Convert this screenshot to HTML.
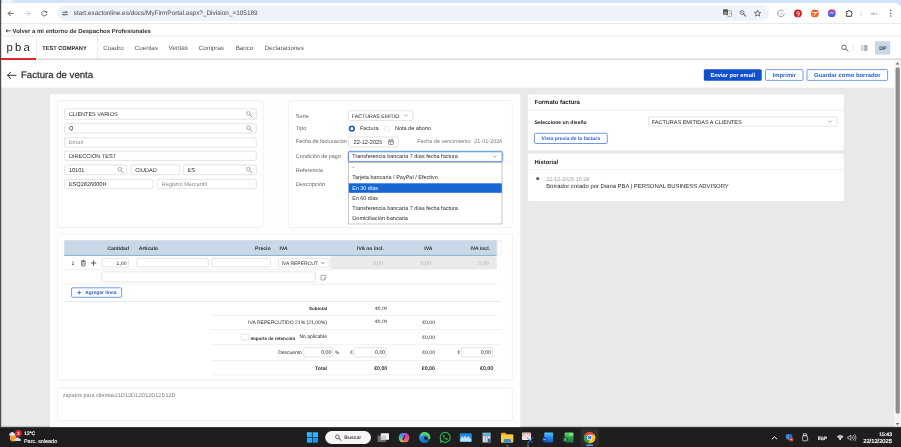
<!DOCTYPE html>
<html lang="es"><head><meta charset="utf-8"><title>Factura de venta</title>
<style>html,body{margin:0;padding:0;width:901px;height:447px;overflow:hidden;background:#fff}body{position:relative;font-family:'Liberation Sans', Arial, sans-serif;}.r{position:absolute;box-sizing:border-box}.t{position:absolute;white-space:pre;line-height:1;text-rendering:geometricPrecision}svg{overflow:visible}</style></head><body>
<svg id="bg" style="position:absolute;left:0;top:0" width="901" height="447" viewBox="0 0 901 447">
<rect x="0.00" y="0.00" width="901.00" height="10.00" fill="#d3e2fb"/>
<path d="M2.00,0.00 H13.00 A0.0,0.0 0 0 1 13.00,0.00 V0.00 A3.0,3.0 0 0 1 10.00,3.00 H5.00 A3.0,3.0 0 0 1 2.00,0.00 V0.00 A0.0,0.0 0 0 1 2.00,0.00 Z" fill="#f1f5fd"/>
<path d="M1.00,3.00 H895.00 A6.0,6.0 0 0 1 901.00,9.00 V23.00 A0.0,0.0 0 0 1 901.00,23.00 H1.00 A0.0,0.0 0 0 1 1.00,23.00 V3.00 A0.0,0.0 0 0 1 1.00,3.00 Z" fill="#fff"/>
<rect x="57.60" y="5.50" width="711.60" height="15.30" rx="7.6" fill="#eef2fa"/>
<rect x="1.00" y="23.00" width="900.00" height="0.70" fill="#dfe1e5"/>
<rect x="1.00" y="35.60" width="900.00" height="0.70" fill="#dedede"/>
<rect x="36.00" y="37.00" width="0.70" height="21.50" fill="#e6e6e6"/>
<rect x="97.20" y="37.00" width="0.70" height="21.50" fill="#e6e6e6"/>
<rect x="1.00" y="58.30" width="900.00" height="1.70" fill="#e2dcda"/>
<rect x="1.00" y="58.00" width="35.00" height="2.00" fill="#e1262d"/>
<rect x="875.00" y="41.30" width="15.30" height="13.30" fill="#c8d8e6"/>
<rect x="852.60" y="44.50" width="0.60" height="7.00" fill="#ddd"/>
<rect x="1.00" y="87.60" width="893.30" height="339.40" fill="#e9e9e7"/>
<rect x="894.30" y="60.00" width="6.70" height="367.00" fill="#f4f4f4"/>
<rect x="895.60" y="67.30" width="4.20" height="346.40" rx="2.0" fill="#8d8d8d"/>
<rect x="0.00" y="0.00" width="1.20" height="447.00" fill="#4a4a4a"/>
<rect x="0.00" y="427.00" width="901.00" height="20.00" fill="#1e1e1f"/>
<rect x="0.00" y="426.70" width="901.00" height="0.70" fill="#6a6a6a"/>
<rect x="703.80" y="69.20" width="57.90" height="11.60" rx="1.5" fill="#0f4fd0"/>
<rect x="765.50" y="69.60" width="37.50" height="10.80" rx="1.10" fill="#fff" stroke="#4f7fde" stroke-width="0.8"/>
<rect x="807.00" y="69.60" width="80.60" height="10.80" rx="1.10" fill="#fff" stroke="#4f7fde" stroke-width="0.8"/>
<rect x="50.00" y="94.20" width="470.30" height="332.80" fill="#fefefe"/>
<rect x="57.55" y="100.55" width="205.70" height="127.00" rx="1.65" fill="#fff" stroke="#ececec" stroke-width="0.7"/>
<rect x="288.55" y="100.55" width="223.70" height="127.00" rx="1.65" fill="#fff" stroke="#ececec" stroke-width="0.7"/>
<rect x="57.55" y="234.05" width="454.90" height="146.00" rx="1.65" fill="#fff" stroke="#ececec" stroke-width="0.7"/>
<rect x="57.55" y="387.95" width="454.90" height="32.70" rx="1.65" fill="#fff" stroke="#ececec" stroke-width="0.7"/>
<rect x="528.00" y="94.40" width="315.80" height="55.90" rx="1.0" fill="#fff"/>
<rect x="528.00" y="153.70" width="315.80" height="47.30" rx="1.0" fill="#fff"/>
<rect x="528.00" y="109.80" width="315.80" height="0.70" fill="#ececec"/>
<rect x="528.00" y="169.20" width="315.80" height="0.70" fill="#ececec"/>
<rect x="64.55" y="108.85" width="191.70" height="10.40" rx="1.15" fill="#fff" stroke="#d9d9d9" stroke-width="0.7"/>
<rect x="64.55" y="123.65" width="191.70" height="9.40" rx="1.15" fill="#fff" stroke="#d9d9d9" stroke-width="0.7"/>
<rect x="64.55" y="137.75" width="191.70" height="9.30" rx="1.15" fill="#fff" stroke="#d9d9d9" stroke-width="0.7"/>
<rect x="64.55" y="151.15" width="191.70" height="9.20" rx="1.15" fill="#fff" stroke="#d9d9d9" stroke-width="0.7"/>
<rect x="64.55" y="164.95" width="62.30" height="9.70" rx="1.15" fill="#fff" stroke="#d9d9d9" stroke-width="0.7"/>
<rect x="130.95" y="164.95" width="48.90" height="9.70" rx="1.15" fill="#fff" stroke="#d9d9d9" stroke-width="0.7"/>
<rect x="183.75" y="164.95" width="72.50" height="9.70" rx="1.15" fill="#fff" stroke="#d9d9d9" stroke-width="0.7"/>
<rect x="64.55" y="179.35" width="88.50" height="9.30" rx="1.15" fill="#fff" stroke="#d9d9d9" stroke-width="0.7"/>
<rect x="157.15" y="179.35" width="99.10" height="9.30" rx="1.15" fill="#fff" stroke="#d9d9d9" stroke-width="0.7"/>
<rect x="348.55" y="110.75" width="64.30" height="9.70" rx="1.15" fill="#fff" stroke="#d9d9d9" stroke-width="0.7"/>
<rect x="348.55" y="136.95" width="49.70" height="9.90" rx="1.15" fill="#fff" stroke="#d9d9d9" stroke-width="0.7"/>
<rect x="347.40" y="150.50" width="156.00" height="12.40" rx="2.30" fill="#6fa0ea" opacity="0.45"/><rect x="348.65" y="151.75" width="153.50" height="9.90" rx="1.05" fill="#fff" stroke="#4a86e0" stroke-width="0.9"/>
<rect x="348.50" y="162.30" width="153.50" height="61.70" rx="0.00" fill="#fff" stroke="#a0a0a0" stroke-width="0.6"/>
<rect x="348.80" y="183.30" width="153.00" height="9.50" fill="#1666d4"/>
<rect x="648.55" y="116.95" width="188.70" height="9.20" rx="1.15" fill="#fff" stroke="#d9d9d9" stroke-width="0.7"/>
<rect x="534.50" y="133.30" width="72.80" height="10.20" rx="1.10" fill="#fff" stroke="#4f7fde" stroke-width="0.8"/>
<rect x="64.20" y="240.20" width="432.60" height="15.50" fill="#c8d8e6"/><rect x="64.20" y="254.90" width="432.60" height="0.80" fill="#7aa2cf"/>
<rect x="497.10" y="240.50" width="4.10" height="14.40" rx="0.00" fill="#fff" stroke="#dde3ea" stroke-width="0.6"/>
<rect x="330.40" y="256.20" width="166.40" height="13.30" fill="#e9e9e7"/>
<rect x="64.20" y="269.50" width="266.20" height="0.60" fill="#e6e6e6"/>
<rect x="64.20" y="283.80" width="432.60" height="0.60" fill="#e6e6e6"/>
<rect x="64.20" y="301.30" width="437.20" height="0.60" fill="#d8d8d8"/>
<rect x="210.80" y="314.90" width="286.00" height="0.60" fill="#e6e6e6"/>
<rect x="210.80" y="329.00" width="290.60" height="0.60" fill="#e6e6e6"/>
<rect x="210.80" y="344.50" width="290.60" height="0.60" fill="#e6e6e6"/>
<rect x="210.80" y="360.20" width="286.00" height="0.60" fill="#e6e6e6"/>
<rect x="210.80" y="374.60" width="286.00" height="0.60" fill="#e6e6e6"/>
<rect x="101.75" y="258.35" width="26.70" height="8.80" rx="1.15" fill="#fff" stroke="#d9d9d9" stroke-width="0.7"/>
<rect x="136.95" y="258.35" width="71.30" height="8.80" rx="1.15" fill="#fff" stroke="#d9d9d9" stroke-width="0.7"/>
<rect x="211.95" y="258.35" width="58.50" height="8.80" rx="1.15" fill="#fff" stroke="#d9d9d9" stroke-width="0.7"/>
<rect x="278.55" y="258.35" width="50.70" height="8.80" rx="1.15" fill="#fff" stroke="#d9d9d9" stroke-width="0.7"/>
<rect x="101.75" y="271.95" width="213.50" height="9.90" rx="1.15" fill="#fff" stroke="#d9d9d9" stroke-width="0.7"/>
<rect x="71.60" y="287.80" width="50.00" height="9.50" rx="1.10" fill="#fff" stroke="#4f7fde" stroke-width="0.8"/>
<rect x="303.75" y="347.65" width="28.90" height="9.40" rx="1.15" fill="#fff" stroke="#d9d9d9" stroke-width="0.7"/>
<rect x="354.05" y="347.65" width="32.20" height="9.40" rx="1.15" fill="#fff" stroke="#d9d9d9" stroke-width="0.7"/>
<rect x="461.35" y="347.65" width="31.10" height="9.40" rx="1.15" fill="#fff" stroke="#d9d9d9" stroke-width="0.7"/>
<rect x="241.30" y="334.10" width="7.00" height="5.80" rx="0.70" fill="#fff" stroke="#d0d0d0" stroke-width="0.6"/>
<rect x="325.20" y="431.00" width="45.80" height="13.00" rx="6.5" fill="#f6f6f6"/>
<rect x="580.50" y="428.80" width="18.50" height="17.80" rx="2.0" fill="#2d2d2e"/>
<rect x="586.20" y="444.60" width="6.80" height="1.40" rx="0.7" fill="#4fa3e0"/>
</svg>
<svg style="position:absolute;left:0;top:0" width="901" height="447" viewBox="0 0 901 447"><g transform="translate(10.7,13.4)"><path d="M2.6,0 H-2.4 M-0.2,-2.3 L-2.5,0 L-0.2,2.3" fill="none" stroke="#555" stroke-width="0.85" stroke-linecap="round" stroke-linejoin="round"/></g></svg>
<svg style="position:absolute;left:0;top:0" width="901" height="447" viewBox="0 0 901 447"><g transform="translate(27.5,13.4)"><path d="M-2.6,0 H2.4 M0.2,-2.3 L2.5,0 L0.2,2.3" fill="none" stroke="#c2c2c2" stroke-width="0.85" stroke-linecap="round" stroke-linejoin="round"/></g></svg>
<svg style="position:absolute;left:0;top:0" width="901" height="447" viewBox="0 0 901 447"><g transform="translate(44.3,13.4)"><path d="M2.3,-0.9 A2.5,2.5 0 1 0 2.4,0.9" fill="none" stroke="#555" stroke-width="0.85" stroke-linecap="round"/><path d="M2.9,-2.6 V-0.6 H0.9 Z" fill="#555"/></g></svg>
<svg style="position:absolute;left:0;top:0" width="901" height="447" viewBox="0 0 901 447"><g transform="translate(65,13.4)"><path d="M-2.6,-1.2 H0.2 M1.8,-1.2 H2.6 M-2.6,1.2 H-1.6 M0,1.2 H2.6" stroke="#555" stroke-width="0.8" stroke-linecap="round"/><circle cx="1" cy="-1.2" r="0.8" fill="none" stroke="#555" stroke-width="0.6"/><circle cx="-0.9" cy="1.2" r="0.8" fill="none" stroke="#555" stroke-width="0.6"/></g></svg>
<svg style="position:absolute;left:0;top:0" width="901" height="447" viewBox="0 0 901 447"><g transform="translate(727.4,13.0)"><rect x="0" y="-2.2" width="4.2" height="5.6" rx="0.6" fill="#fff" stroke="#777" stroke-width="0.6"/><rect x="-4.4" y="-3.8" width="5" height="5.6" rx="0.7" fill="#555"/><path d="M-2.9,-1 A1.1,1.1 0 1 0 -0.9,-0.6 H-2" fill="none" stroke="#fff" stroke-width="0.5"/><path d="M1.4,0.2 H3.4 M2.4,-0.3 V0.2 M1.6,2.4 L3.2,0.4" stroke="#777" stroke-width="0.45" fill="none"/></g></svg>
<svg style="position:absolute;left:0;top:0" width="901" height="447" viewBox="0 0 901 447"><g transform="translate(742.6,13.1)"><circle cx="-0.6" cy="-0.6" r="2.0" fill="none" stroke="#666" stroke-width="0.85"/><path d="M1.1,1.1 L3.1,3.1" stroke="#666" stroke-width="1.05" stroke-linecap="round"/></g></svg>
<svg style="position:absolute;left:0;top:0" width="901" height="447" viewBox="0 0 901 447"><g transform="translate(742.0,12.5)"><path d="M-1,0 H1" stroke="#666" stroke-width="0.5"/></g></svg>
<svg style="position:absolute;left:0;top:0" width="901" height="447" viewBox="0 0 901 447"><g transform="translate(757.6,13.3)"><path d="M0,-3.1 L0.95,-1.05 L3.1,-0.85 L1.45,0.6 L1.95,2.8 L0,1.65 L-1.95,2.8 L-1.45,0.6 L-3.1,-0.85 L-0.95,-1.05 Z" fill="none" stroke="#4a4a4a" stroke-width="0.75" stroke-linejoin="round"/></g></svg>
<svg width="0" height="0" style="position:absolute"><defs><linearGradient id="gExt" x1="0" y1="0" x2="0" y2="1"><stop offset="0" stop-color="#e0405e"/><stop offset="0.45" stop-color="#7a55e0"/><stop offset="1" stop-color="#2468ea"/></linearGradient></defs></svg>
<svg style="position:absolute;left:0;top:0" width="901" height="447" viewBox="0 0 901 447"><g transform="translate(781,13.4)"><path d="M2.6,-2 A3.3,3.3 0 1 0 3.3,0.2" fill="none" stroke="#9a9a9a" stroke-width="1"/><path d="M-1.2,0.2 L-0.2,1.2 L1.8,-1" fill="none" stroke="#9a9a9a" stroke-width="0.8"/></g></svg>
<svg style="position:absolute;left:0;top:0" width="901" height="447" viewBox="0 0 901 447"><g transform="translate(797.9,13.4)"><circle r="3.9" fill="#cf1620"/><circle cx="0.1" cy="-0.6" r="1.3" fill="none" stroke="#fff" stroke-width="0.7"/><path d="M1.4,-0.6 V1.4 A1.3,1.3 0 0 1 -1,2" fill="none" stroke="#fff" stroke-width="0.7"/></g></svg>
<svg style="position:absolute;left:0;top:0" width="901" height="447" viewBox="0 0 901 447"><g transform="translate(814.9,13.4)"><circle r="3.9" fill="#f2652f"/><path d="M-2.2,-0.9 H2.4 M0.9,-0.9 L-0.8,2.2" stroke="#fff" stroke-width="0.9" fill="none" stroke-linecap="round"/></g></svg>
<svg style="position:absolute;left:0;top:0" width="901" height="447" viewBox="0 0 901 447"><g transform="translate(831.8,13.2)"><circle r="3.9" fill="url(#gExt)"/><path d="M-1.8,0.6 L-0.4,-1 L0.4,0.4 L1.8,-0.8" fill="none" stroke="#fff" stroke-width="0.7" stroke-linecap="round" stroke-linejoin="round"/></g></svg>
<svg style="position:absolute;left:0;top:0" width="901" height="447" viewBox="0 0 901 447"><g transform="translate(849,13.4)"><path d="M-2.7,-2 H-0.9 A0.95,0.95 0 0 1 1,-2 H2.5 V-0.6 A0.95,0.95 0 0 1 2.5,1.2 V2.9 H-2.7 V1.2 A0.9,0.9 0 0 0 -2.7,-0.6 Z" fill="none" stroke="#3c3c3c" stroke-width="1" stroke-linejoin="round"/></g></svg>
<svg style="position:absolute;left:0;top:0" width="901" height="447" viewBox="0 0 901 447"><g transform="translate(861.2,13.4)"><path d="M0,-3.2 V3.2" stroke="#d3e0f8" stroke-width="0.9"/></g></svg>
<svg style="position:absolute;left:0;top:0" width="901" height="447" viewBox="0 0 901 447"><g transform="translate(890.8,13.2)"><circle cy="-2.8" r="0.7" fill="#4a4a4a"/><circle r="0.7" fill="#4a4a4a"/><circle cy="2.8" r="0.7" fill="#4a4a4a"/></g></svg>
<svg style="position:absolute;left:0;top:0" width="901" height="447" viewBox="0 0 901 447"><g transform="translate(844.6,47.9)"><circle cx="-0.6" cy="-0.6" r="2.2" fill="none" stroke="#444" stroke-width="0.8"/><path d="M1.2100000000000002,1.2100000000000002 L3.3000000000000003,3.3000000000000003" stroke="#444" stroke-width="1.0" stroke-linecap="round"/></g></svg>
<svg style="position:absolute;left:0;top:0" width="901" height="447" viewBox="0 0 901 447"><g transform="translate(864.4,48)"><path d="M-0.8,-2 H3.2 M-0.8,0 H3.2 M-0.8,2 H3.2" stroke="#444" stroke-width="0.8"/><circle cx="-2.5" cy="-2" r="0.55" fill="#444"/><circle cx="-2.5" cy="0" r="0.55" fill="#444"/><circle cx="-2.5" cy="2" r="0.55" fill="#444"/></g></svg>
<svg style="position:absolute;left:0;top:0" width="901" height="447" viewBox="0 0 901 447"><g transform="translate(11.6,75.3)"><path d="M4.4,0 H-4 M-0.8,-3.2 L-4.1,0 L-0.8,3.2" fill="none" stroke="#333" stroke-width="1" stroke-linecap="round" stroke-linejoin="round"/></g></svg>
<svg style="position:absolute;left:0;top:0" width="901" height="447" viewBox="0 0 901 447"><g transform="translate(249,114)"><circle cx="-0.6" cy="-0.6" r="1.8" fill="none" stroke="#8a8a8a" stroke-width="0.7"/><path d="M0.9900000000000001,0.9900000000000001 L2.9000000000000004,2.9000000000000004" stroke="#8a8a8a" stroke-width="0.8999999999999999" stroke-linecap="round"/></g></svg>
<svg style="position:absolute;left:0;top:0" width="901" height="447" viewBox="0 0 901 447"><g transform="translate(249,128.3)"><circle cx="-0.6" cy="-0.6" r="1.8" fill="none" stroke="#8a8a8a" stroke-width="0.7"/><path d="M0.9900000000000001,0.9900000000000001 L2.9000000000000004,2.9000000000000004" stroke="#8a8a8a" stroke-width="0.8999999999999999" stroke-linecap="round"/></g></svg>
<svg style="position:absolute;left:0;top:0" width="901" height="447" viewBox="0 0 901 447"><g transform="translate(120.3,169.8)"><circle cx="-0.6" cy="-0.6" r="1.8" fill="none" stroke="#8a8a8a" stroke-width="0.7"/><path d="M0.9900000000000001,0.9900000000000001 L2.9000000000000004,2.9000000000000004" stroke="#8a8a8a" stroke-width="0.8999999999999999" stroke-linecap="round"/></g></svg>
<svg style="position:absolute;left:0;top:0" width="901" height="447" viewBox="0 0 901 447"><g transform="translate(249,169.8)"><circle cx="-0.6" cy="-0.6" r="1.8" fill="none" stroke="#8a8a8a" stroke-width="0.7"/><path d="M0.9900000000000001,0.9900000000000001 L2.9000000000000004,2.9000000000000004" stroke="#8a8a8a" stroke-width="0.8999999999999999" stroke-linecap="round"/></g></svg>
<svg style="position:absolute;left:0;top:0" width="901" height="447" viewBox="0 0 901 447"><g transform="translate(406,115.6)"><path d="M-1.55,-0.775 L0,0.775 L1.55,-0.775" fill="none" stroke="#808080" stroke-width="0.65" stroke-linecap="round" stroke-linejoin="round"/></g></svg>
<svg style="position:absolute;left:0;top:0" width="901" height="447" viewBox="0 0 901 447"><g transform="translate(351.9,128.6)"><circle r="2.35" fill="#fff" stroke="#1456d6" stroke-width="1.6"/></g></svg>
<svg style="position:absolute;left:0;top:0" width="901" height="447" viewBox="0 0 901 447"><g transform="translate(387,128.6)"><circle r="2.8" fill="#fff" stroke="#dcdcdc" stroke-width="0.6"/></g></svg>
<svg style="position:absolute;left:0;top:0" width="901" height="447" viewBox="0 0 901 447"><g transform="translate(391,142)"><rect x="-2.3" y="-2" width="4.6" height="4.4" rx="0.5" fill="none" stroke="#666" stroke-width="0.7"/><path d="M-2.3,-0.6 H2.3 M-1.1,-2.8 V-1.6 M1.1,-2.8 V-1.6" stroke="#666" stroke-width="0.7"/><rect x="-1.1" y="0.3" width="1.2" height="1.2" fill="#888"/></g></svg>
<svg style="position:absolute;left:0;top:0" width="901" height="447" viewBox="0 0 901 447"><g transform="translate(494.6,156.6)"><path d="M-1.55,-0.775 L0,0.775 L1.55,-0.775" fill="none" stroke="#808080" stroke-width="0.65" stroke-linecap="round" stroke-linejoin="round"/></g></svg>
<svg style="position:absolute;left:0;top:0" width="901" height="447" viewBox="0 0 901 447"><g transform="translate(830,121.6)"><path d="M-1.55,-0.775 L0,0.775 L1.55,-0.775" fill="none" stroke="#808080" stroke-width="0.65" stroke-linecap="round" stroke-linejoin="round"/></g></svg>
<svg style="position:absolute;left:0;top:0" width="901" height="447" viewBox="0 0 901 447"><g transform="translate(537.7,178.6)"><circle r="1.7" fill="#6a6a6a"/></g></svg>
<svg style="position:absolute;left:0;top:0" width="901" height="447" viewBox="0 0 901 447"><g transform="translate(83.3,263)"><path d="M-2.4,-1.9 H2.4 M-0.9,-2.8 H0.9" stroke="#444" stroke-width="0.7"/><rect x="-1.8" y="-1.5" width="3.6" height="4.4" rx="0.5" fill="none" stroke="#444" stroke-width="0.7"/><path d="M-0.6,-0.4 V1.9 M0.6,-0.4 V1.9" stroke="#444" stroke-width="0.45"/></g></svg>
<svg style="position:absolute;left:0;top:0" width="901" height="447" viewBox="0 0 901 447"><g transform="translate(93.6,263)"><path d="M-2.6,0 H2.6 M0,-2.6 V2.6" stroke="#333" stroke-width="0.8"/></g></svg>
<svg style="position:absolute;left:0;top:0" width="901" height="447" viewBox="0 0 901 447"><g transform="translate(322.6,263.1)"><path d="M-1.5,-0.75 L0,0.75 L1.5,-0.75" fill="none" stroke="#666" stroke-width="0.65" stroke-linecap="round" stroke-linejoin="round"/></g></svg>
<svg style="position:absolute;left:0;top:0" width="901" height="447" viewBox="0 0 901 447"><g transform="translate(323.5,277.6)"><path d="M-2.5,-2.3 H2.5 V0.8 L0.8,2.4 H-2.5 Z M2.5,0.8 H0.8 V2.4" fill="none" stroke="#777" stroke-width="0.6" stroke-linejoin="round"/></g></svg>
<svg style="position:absolute;left:0;top:0" width="901" height="447" viewBox="0 0 901 447"><g transform="translate(79.3,292.6)"><path d="M-2.1,0 H2.1 M0,-2.1 V2.1" stroke="#2b62d0" stroke-width="0.8"/></g></svg>
<svg style="position:absolute;left:0;top:0" width="901" height="447" viewBox="0 0 901 447"><g transform="translate(897.5,63.4)"><path d="M-1.8,1 L0,-1.2 L1.8,1 Z" fill="#666"/></g></svg>
<svg style="position:absolute;left:0;top:0" width="901" height="447" viewBox="0 0 901 447"><g transform="translate(897.5,424)"><path d="M-1.8,-1 L0,1.2 L1.8,-1 Z" fill="#666"/></g></svg>
<svg width="0" height="0" style="position:absolute"><defs><linearGradient id="gWin" x1="0" y1="0" x2="1" y2="1"><stop offset="0" stop-color="#5ccbff"/><stop offset="1" stop-color="#1390e0"/></linearGradient><linearGradient id="gCopL" x1="0" y1="0" x2="0.3" y2="1"><stop offset="0" stop-color="#2f7df4"/><stop offset="0.55" stop-color="#2fc7a8"/><stop offset="1" stop-color="#f5d13a"/></linearGradient><linearGradient id="gCopR" x1="0.3" y1="0" x2="0.6" y2="1"><stop offset="0" stop-color="#b04cf0"/><stop offset="0.5" stop-color="#e544a8"/><stop offset="1" stop-color="#f58a3a"/></linearGradient><linearGradient id="gEdge" x1="0" y1="0" x2="0.6" y2="1"><stop offset="0" stop-color="#2bb6ee"/><stop offset="1" stop-color="#1460c8"/></linearGradient><linearGradient id="gPh" x1="0" y1="0" x2="0" y2="1"><stop offset="0" stop-color="#1a7fe0"/><stop offset="1" stop-color="#3aa8f2"/></linearGradient><linearGradient id="gOut" x1="0" y1="0" x2="0" y2="1"><stop offset="0" stop-color="#46ccf8"/><stop offset="0.5" stop-color="#2487ea"/><stop offset="1" stop-color="#1558c8"/></linearGradient><linearGradient id="gXl" x1="0" y1="0" x2="0" y2="1"><stop offset="0" stop-color="#62d66a"/><stop offset="0.5" stop-color="#2fa548"/><stop offset="1" stop-color="#1a7a3c"/></linearGradient></defs></svg>
<svg style="position:absolute;left:0;top:0" width="901" height="447" viewBox="0 0 901 447"><g transform="translate(0,0)"><circle cx="13.2" cy="438.1" r="3.4" fill="#f59a23"/><path d="M9.8,435.7 A1.5,1.5 0 0 1 10.4,433 A2.2,2.2 0 0 1 14.4,433.4 A1.2,1.2 0 0 1 14.6,435.7 Z" fill="#dbe6f8"/><path d="M15,441.1 A1.5,1.5 0 0 1 15.8,438.4 A2.3,2.3 0 0 1 19.8,438.8 A1.2,1.2 0 0 1 20.2,441.1 Z" fill="#cfdcf4"/></g></svg>
<svg style="position:absolute;left:0;top:0" width="901" height="447" viewBox="0 0 901 447"><g transform="translate(18.4,433.4)"><circle r="3.3" fill="#d9262c"/></g></svg>
<svg style="position:absolute;left:0;top:0" width="901" height="447" viewBox="0 0 901 447"><g transform="translate(312.5,437.5)"><rect x="-5.5" y="-5.2" width="5.2" height="4.9" fill="url(#gWin)"/><rect x="0.3" y="-5.2" width="5.2" height="4.9" fill="#39b0f2"/><rect x="-5.5" y="0.3" width="5.2" height="4.9" fill="#2fa6ec"/><rect x="0.3" y="0.3" width="5.2" height="4.9" fill="#1b94e2"/></g></svg>
<svg style="position:absolute;left:0;top:0" width="901" height="447" viewBox="0 0 901 447"><g transform="translate(338,437.4)"><circle cx="-0.6" cy="-0.6" r="1.9" fill="none" stroke="#444" stroke-width="0.8"/><path d="M1.045,1.045 L3.0,3.0" stroke="#444" stroke-width="1.0" stroke-linecap="round"/></g></svg>
<svg style="position:absolute;left:0;top:0" width="901" height="447" viewBox="0 0 901 447"><g transform="translate(0,0)"><rect x="377.5" y="435.5" width="8.5" height="6.5" rx="0.6" fill="#6c6c6c"/><rect x="380.8" y="433.2" width="8.2" height="6.6" rx="0.6" fill="#f1f1f1"/><rect x="380.8" y="435.5" width="5.2" height="4.3" fill="#c9c9c9"/></g></svg>
<svg style="position:absolute;left:0;top:0" width="901" height="447" viewBox="0 0 901 447"><g transform="translate(404,437.7)"><path d="M-0.6,-4.6 C-3.6,-4.9 -5.4,-2.6 -5.2,0.4 C-5.1,3 -3.6,4.8 -1,4.6 C0.6,4.5 1.2,3.4 1.6,2 L2.2,-2.4 C2.2,-3.8 1,-4.5 -0.6,-4.6 Z" fill="url(#gCopL)"/><path d="M0.8,4.6 C3.8,4.9 5.5,2.6 5.3,-0.4 C5.2,-3 3.6,-4.8 1,-4.6 C-0.4,-4.5 -1,-3.4 -1.4,-2 L-2,2.4 C-2,3.8 -0.8,4.5 0.8,4.6 Z" fill="url(#gCopR)" opacity="0.95"/><path d="M0.9,-1.9 L-0.9,1.9" stroke="#1e1e1f" stroke-width="1.1" stroke-linecap="round"/></g></svg>
<svg style="position:absolute;left:0;top:0" width="901" height="447" viewBox="0 0 901 447"><g transform="translate(424.6,437.6)"><circle r="5.6" fill="url(#gEdge)"/><path d="M-3.2,-4.6 A5.6,5.6 0 0 1 5.6,0.6 C5.4,2 4.6,2.4 3.4,2.4 L1.2,1.2 C3,0.6 3.2,-1 2,-2 C0.4,-3.2 -2,-2.8 -3.4,-1.2 C-4.4,-2.2 -4.2,-3.6 -3.2,-4.6 Z" fill="#52d06a"/><path d="M-0.8,0.4 C-0.6,-1.4 2.4,-1.6 3.2,0 C3.8,1.4 2.8,2.2 1.6,2.2 C0.4,2.2 -0.9,1.6 -0.8,0.4 Z" fill="#1e1e1f"/><path d="M1.6,2.2 L5.4,1.4 L4.6,3.2 Z" fill="#1e1e1f"/></g></svg>
<svg style="position:absolute;left:0;top:0" width="901" height="447" viewBox="0 0 901 447"><g transform="translate(445.2,437.4)"><circle r="5" fill="none" stroke="#2bb750" stroke-width="1.1"/><path d="M-5.4,5.6 L-4.4,2.2 L-2.2,4.4 Z" fill="#2bb750"/><path d="M-2.2,-2.2 C-2.2,0.8 0.6,2.8 2.6,2.4 L2.6,1.1 L1.2,0.5 L0.5,1.1 C-0.2,0.8 -0.9,0 -1.1,-0.6 L-0.5,-1.3 L-1.1,-2.6 Z" fill="#2bb750"/></g></svg>
<svg style="position:absolute;left:0;top:0" width="901" height="447" viewBox="0 0 901 447"><g transform="translate(0,0)"><rect x="459.8" y="433.2" width="12" height="8.8" rx="0.9" fill="url(#gPh)"/><path d="M460.4,441.4 V439 L462.4,436 L463.6,438 L465.2,435.4 L466.8,438.2 L468.2,436 L471.2,439.4 V441.4 Z" fill="#bfe2fb"/></g></svg>
<svg style="position:absolute;left:0;top:0" width="901" height="447" viewBox="0 0 901 447"><g transform="translate(0,0)"><rect x="482.3" y="432.5" width="8.5" height="10.3" rx="0.7" fill="#858b93"/><rect x="483" y="433.1" width="7.1" height="2.2" fill="#4cc4ea"/><rect x="483" y="436" width="2" height="6.1" fill="#d8dce2"/><rect x="485.5" y="436" width="2" height="6.1" fill="#d8dce2"/><rect x="488" y="436" width="2.1" height="2.6" fill="#d8dce2"/><rect x="488" y="439" width="2.1" height="3.1" fill="#1f5fc0"/></g></svg>
<svg style="position:absolute;left:0;top:0" width="901" height="447" viewBox="0 0 901 447"><g transform="translate(0,0)"><path d="M501,433.6 A0.8,0.8 0 0 1 501.8,432.8 H505.4 L506.8,434.2 H512.4 A0.8,0.8 0 0 1 513.2,435 V441.7 A0.8,0.8 0 0 1 512.4,442.5 H501.8 A0.8,0.8 0 0 1 501,441.7 Z" fill="#e9a41e"/><rect x="501" y="434.8" width="12.2" height="7.7" rx="0.8" fill="#fbcb45"/><path d="M503.7,442.5 V440.4 A1.4,1.4 0 0 1 505.1,439 H509.6 A1.4,1.4 0 0 1 511,440.4 V442.5 Z" fill="#2d8be0"/></g></svg>
<svg style="position:absolute;left:0;top:0" width="901" height="447" viewBox="0 0 901 447"><g transform="translate(507.4,445.7)"><rect x="-1.1" y="-0.5" width="2.2" height="1" rx="0.5" fill="#a0a0a0"/></g></svg>
<svg style="position:absolute;left:0;top:0" width="901" height="447" viewBox="0 0 901 447"><g transform="translate(0,0)"><rect x="522" y="432.5" width="9" height="7.6" rx="0.9" fill="#ececec"/><rect x="523.4" y="433.8" width="6.2" height="5" fill="#f6d8d4"/><path d="M523.2,436 V433.6 H525.6 M527.2,433.6 H529.8 V435.6" fill="none" stroke="#d8412f" stroke-width="0.8" stroke-dasharray="1.2 0.6"/><path d="M527.4,438 L532.6,442.4 M532.8,437.6 L528.4,442.8" stroke="#2f86dc" stroke-width="0.9" stroke-linecap="round"/><circle cx="528" cy="443" r="0.8" fill="none" stroke="#2f86dc" stroke-width="0.5"/></g></svg>
<svg style="position:absolute;left:0;top:0" width="901" height="447" viewBox="0 0 901 447"><g transform="translate(528,445.7)"><rect x="-1.1" y="-0.5" width="2.2" height="1" rx="0.5" fill="#a0a0a0"/></g></svg>
<svg style="position:absolute;left:0;top:0" width="901" height="447" viewBox="0 0 901 447"><g transform="translate(0,0)"><rect x="544.2" y="432.5" width="9" height="10" rx="1.1" fill="url(#gOut)"/><rect x="542.5" y="437.4" width="4.6" height="4.3" rx="0.7" fill="#0f4bb0"/><path d="M543.4,438.6 L544.8,440.2 L546.2,438.6" fill="none" stroke="#fff" stroke-width="0.6"/></g></svg>
<svg style="position:absolute;left:0;top:0" width="901" height="447" viewBox="0 0 901 447"><g transform="translate(0,0)"><rect x="564.6" y="432.5" width="8.9" height="10" rx="1.1" fill="url(#gXl)"/><rect x="569" y="432.9" width="4.1" height="3" fill="#8be08c" opacity="0.8"/><rect x="563" y="437.4" width="4.8" height="4.4" rx="0.7" fill="#155e33"/><path d="M564.3,438.4 L566.5,440.8 M566.5,438.4 L564.3,440.8" stroke="#fff" stroke-width="0.6"/></g></svg>
<svg style="position:absolute;left:0;top:0" width="901" height="447" viewBox="0 0 901 447"><g transform="translate(589.6,437.5)"><circle r="5.8" fill="#e8453c"/><path d="M0,0 L-5.05,-2.85 A5.8,5.8 0 0 0 -0.6,5.77 L2.2,1 Z" fill="#2ea650"/><path d="M0,0 L-0.6,5.77 A5.8,5.8 0 0 0 5.1,-2.75 L0,-2.75 Z" fill="#fbc116"/><circle r="2.75" fill="#fff"/><circle r="2.1" fill="#4486f4"/></g></svg>
<svg style="position:absolute;left:0;top:0" width="901" height="447" viewBox="0 0 901 447"><g transform="translate(774.5,437.9)"><path d="M-2.3,1.1 L0,-1.1 L2.3,1.1" fill="none" stroke="#fff" stroke-width="1.0" stroke-linecap="round" stroke-linejoin="round"/></g></svg>
<svg style="position:absolute;left:0;top:0" width="901" height="447" viewBox="0 0 901 447"><g transform="translate(789,437)"><path d="M-3.1,-2.2 L0,-3 L3.1,-2.2 V0.2 C3.1,1.8 1.4,2.6 0,3 C-1.4,2.6 -3.1,1.8 -3.1,0.2 Z" fill="#2f90e8"/><path d="M0,-3 L3.1,-2.2 V0.2 C3.1,1.8 1.4,2.6 0,3 Z" fill="#1d6ecc"/><circle cx="2.3" cy="2.4" r="2.2" fill="#e0323a"/><path d="M1.5,1.6 L3.1,3.2 M3.1,1.6 L1.5,3.2" stroke="#fff" stroke-width="0.5"/></g></svg>
<svg style="position:absolute;left:0;top:0" width="901" height="447" viewBox="0 0 901 447"><g transform="translate(805,437.4)"><rect x="-2.4" y="-1.6" width="4.8" height="5" rx="0.7" fill="none" stroke="#ececec" stroke-width="0.7"/><rect x="-1.5" y="-3.5" width="3" height="1.9" fill="none" stroke="#ececec" stroke-width="0.7"/><path d="M2.6,2.6 H3.6" stroke="#ececec" stroke-width="0.6"/></g></svg>
<svg style="position:absolute;left:0;top:0" width="901" height="447" viewBox="0 0 901 447"><g transform="translate(840.2,438)"><path d="M-3.1,-1.2 A4.4,4.4 0 0 1 3.1,-1.2 L0,1.9 Z" fill="#bdbdbd"/><path d="M-3.1,-1.2 A4.4,4.4 0 0 1 3.1,-1.2" fill="none" stroke="#f2f2f2" stroke-width="0.7"/><circle cy="1.3" r="0.7" fill="#fff"/></g></svg>
<svg style="position:absolute;left:0;top:0" width="901" height="447" viewBox="0 0 901 447"><g transform="translate(851.4,437.7)"><path d="M-3.6,-1 H-2.3 L-0.6,-2.7 V2.7 L-2.3,1 H-3.6 Z" fill="none" stroke="#f0f0f0" stroke-width="0.65" stroke-linejoin="round"/><path d="M0.8,-1.2 A1.8,1.8 0 0 1 0.8,1.2 M2.1,-2.4 A3.4,3.4 0 0 1 2.1,2.4 M3.4,-3.2 A4.6,4.6 0 0 1 3.4,3.2" fill="none" stroke="#f0f0f0" stroke-width="0.6" stroke-linecap="round"/></g></svg>
<div id="txt" style="position:absolute;left:0;top:0;width:901px;height:447px;will-change:transform">
<span class="t" style="left:73.70px;top:11.10px;font-size:6.41px;font-weight:400;color:#44474c;">start.exactonline.es/docs/MyFirmPortal.aspx?_Division_=105189</span>
<span class="t" style="left:5.40px;top:27.93px;font-size:6.92px;font-weight:700;color:#333;font-family:'DejaVu Sans',sans-serif;">←</span>
<span class="t" style="left:12.60px;top:28.83px;font-size:5.98px;font-weight:700;color:#333;">Volver a mi entorno de Despachos Profesionales</span>
<span class="t" style="left:6.50px;top:43.04px;font-size:11.24px;font-weight:400;color:#222;letter-spacing:0.2em;">pba</span>
<span class="t" style="left:42.30px;top:47.20px;font-size:5.65px;font-weight:700;color:#222;">TEST COMPANY</span>
<span class="t" style="left:103.30px;top:45.89px;font-size:6.25px;font-weight:400;color:#555;">Cuadro</span>
<span class="t" style="left:134.80px;top:45.91px;font-size:6.20px;font-weight:400;color:#555;">Cuentas</span>
<span class="t" style="left:168.60px;top:45.84px;font-size:6.34px;font-weight:400;color:#555;">Ventas</span>
<span class="t" style="left:198.70px;top:45.89px;font-size:6.24px;font-weight:400;color:#555;">Compras</span>
<span class="t" style="left:235.70px;top:45.91px;font-size:6.21px;font-weight:400;color:#555;">Banco</span>
<span class="t" style="left:264.50px;top:45.90px;font-size:6.22px;font-weight:400;color:#555;">Declaraciones</span>
<span class="t" style="left:879.30px;top:47.31px;font-size:5.25px;font-weight:700;color:#2a3a4a;">DP</span>
<span class="t" style="left:870.60px;top:12.20px;font-size:4.34px;font-weight:400;color:#8a8a8a;">abc</span>
<span class="t" style="left:21.00px;top:70.50px;font-size:9.62px;font-weight:400;color:#333;-webkit-text-stroke:0.25px #333;">Factura de venta</span>
<span class="t" style="left:710.50px;top:74.07px;font-size:5.72px;font-weight:700;color:#fff;">Enviar por email</span>
<span class="t" style="left:772.60px;top:74.00px;font-size:5.85px;font-weight:700;color:#2b62d0;">Imprimir</span>
<span class="t" style="left:814.00px;top:73.97px;font-size:5.90px;font-weight:700;color:#2b62d0;">Guardar como borrador</span>
<span class="t" style="left:68.90px;top:113.19px;font-size:5.49px;font-weight:400;color:#2b2b2b;">CLIENTES VARIOS</span>
<span class="t" style="left:68.90px;top:127.03px;font-size:5.60px;font-weight:400;color:#2b2b2b;">Q</span>
<span class="t" style="left:68.90px;top:141.13px;font-size:5.60px;font-weight:400;color:#8a8a8a;">Email</span>
<span class="t" style="left:68.90px;top:154.83px;font-size:5.60px;font-weight:400;color:#2b2b2b;">DIRECCION TEST</span>
<span class="t" style="left:68.90px;top:169.03px;font-size:5.60px;font-weight:400;color:#2b2b2b;">10101</span>
<span class="t" style="left:135.30px;top:169.03px;font-size:5.60px;font-weight:400;color:#2b2b2b;">CIUDAD</span>
<span class="t" style="left:187.60px;top:169.03px;font-size:5.60px;font-weight:400;color:#2b2b2b;">ES</span>
<span class="t" style="left:68.90px;top:183.13px;font-size:5.60px;font-weight:400;color:#2b2b2b;">ESQ2826000H</span>
<span class="t" style="left:161.80px;top:183.13px;font-size:5.60px;font-weight:400;color:#8a8a8a;">Registro Mercantil</span>
<span class="t" style="left:295.80px;top:115.03px;font-size:5.60px;font-weight:400;color:#666;">Serie</span>
<span class="t" style="left:295.80px;top:127.33px;font-size:5.60px;font-weight:400;color:#666;">Tipo</span>
<span class="t" style="left:295.80px;top:139.51px;font-size:5.46px;font-weight:400;color:#666;">Fecha de facturación</span>
<span class="t" style="left:295.80px;top:154.93px;font-size:5.42px;font-weight:400;color:#666;">Condición de pago</span>
<span class="t" style="left:295.80px;top:168.63px;font-size:5.60px;font-weight:400;color:#666;">Referencia</span>
<span class="t" style="left:295.80px;top:183.33px;font-size:5.60px;font-weight:400;color:#666;">Descripción</span>
<span class="t" style="left:351.80px;top:115.02px;font-size:5.25px;font-weight:400;color:#2b2b2b;">FACTURAS EMITID.</span>
<span class="t" style="left:360.00px;top:126.51px;font-size:5.46px;font-weight:400;color:#2b2b2b;">Factura</span>
<span class="t" style="left:395.00px;top:127.49px;font-size:5.49px;font-weight:400;color:#2b2b2b;">Nota de abono</span>
<span class="t" style="left:353.60px;top:141.02px;font-size:5.63px;font-weight:400;color:#2b2b2b;">22-12-2025</span>
<span class="t" style="left:417.20px;top:139.51px;font-size:5.46px;font-weight:400;color:#777;">Fecha de vencimiento</span>
<span class="t" style="left:474.30px;top:140.48px;font-size:5.51px;font-weight:400;color:#777;">21-01-2026</span>
<span class="t" style="left:352.30px;top:154.89px;font-size:5.49px;font-weight:400;color:#2b2b2b;">Transferencia bancaria 7 días fecha factura</span>
<span class="t" style="left:352.60px;top:166.23px;font-size:5.60px;font-weight:400;color:#2b2b2b;">-</span>
<span class="t" style="left:352.30px;top:176.47px;font-size:5.53px;font-weight:400;color:#2b2b2b;">Tarjeta bancaria / PayPal / Efectivo</span>
<span class="t" style="left:352.30px;top:187.25px;font-size:5.38px;font-weight:400;color:#fff;">En 30 días</span>
<span class="t" style="left:352.30px;top:196.65px;font-size:5.38px;font-weight:400;color:#2b2b2b;">En 60 días</span>
<span class="t" style="left:352.30px;top:206.69px;font-size:5.49px;font-weight:400;color:#2b2b2b;">Transferencia bancaria 7 días fecha factura</span>
<span class="t" style="left:352.30px;top:216.75px;font-size:5.57px;font-weight:400;color:#2b2b2b;">Domiciliación bancaria</span>
<span class="t" style="left:534.50px;top:100.33px;font-size:5.98px;font-weight:700;color:#222;">Formato factura</span>
<span class="t" style="left:534.50px;top:121.49px;font-size:5.11px;font-weight:700;color:#222;">Seleccione un diseño</span>
<span class="t" style="left:651.80px;top:120.79px;font-size:5.50px;font-weight:400;color:#2b2b2b;">FACTURAS EMITIDAS A CLIENTES</span>
<span class="t" style="left:541.60px;top:136.86px;font-size:4.98px;font-weight:700;color:#2b62d0;">Vista previa de la factura</span>
<span class="t" style="left:534.50px;top:160.76px;font-size:5.92px;font-weight:700;color:#222;">Historial</span>
<span class="t" style="left:546.20px;top:178.30px;font-size:5.47px;font-weight:400;color:#999;">22-12-2025 15:28</span>
<span class="t" style="left:546.20px;top:184.77px;font-size:5.90px;font-weight:400;color:#2b2b2b;">Borrador creado por Diana PBA | PERSONAL BUSINESS ADVISORY</span>
<span class="t" style="left:107.40px;top:246.72px;font-size:5.05px;font-weight:700;color:#2a2f36;">Cantidad</span>
<span class="t" style="left:138.70px;top:246.69px;font-size:5.11px;font-weight:700;color:#2a2f36;">Artículo</span>
<span class="t" style="left:255.10px;top:246.71px;font-size:5.07px;font-weight:700;color:#2a2f36;">Precio</span>
<span class="t" style="left:279.60px;top:246.70px;font-size:5.09px;font-weight:700;color:#2a2f36;">IVA</span>
<span class="t" style="left:357.10px;top:246.74px;font-size:5.02px;font-weight:700;color:#2a2f36;">IVA no incl.</span>
<span class="t" style="left:424.30px;top:246.74px;font-size:5.02px;font-weight:700;color:#2a2f36;">IVA</span>
<span class="t" style="left:470.50px;top:246.70px;font-size:5.09px;font-weight:700;color:#2a2f36;">IVA incl.</span>
<span class="t" style="left:71.60px;top:262.24px;font-size:5.20px;font-weight:400;color:#2b2b2b;">1</span>
<span class="t" style="left:116.60px;top:262.28px;font-size:5.14px;font-weight:400;color:#2b2b2b;">1,00</span>
<span class="t" style="left:281.60px;top:262.35px;font-size:5.00px;font-weight:400;color:#2b2b2b;">IVA REPERCUT</span>
<span class="t" style="left:372.80px;top:262.25px;font-size:5.19px;font-weight:400;color:#b3b3b3;">0,00</span>
<span class="t" style="left:420.60px;top:262.20px;font-size:5.29px;font-weight:400;color:#b3b3b3;">0,00</span>
<span class="t" style="left:478.40px;top:262.20px;font-size:5.29px;font-weight:400;color:#b3b3b3;">0,00</span>
<span class="t" style="left:85.20px;top:292.10px;font-size:4.91px;font-weight:700;color:#2b62d0;">Agregar línea</span>
<span class="t" style="left:309.00px;top:307.01px;font-size:4.50px;font-weight:700;color:#2a2f36;">Subtotal</span>
<span class="t" style="left:375.20px;top:307.84px;font-size:4.84px;font-weight:400;color:#2b2b2b;">€0,00</span>
<span class="t" style="left:248.00px;top:321.13px;font-size:5.05px;font-weight:400;color:#2b2b2b;">IVA REPERCUTIDO 21% (21,00%)</span>
<span class="t" style="left:375.20px;top:321.24px;font-size:4.84px;font-weight:400;color:#2b2b2b;">€0,00</span>
<span class="t" style="left:422.30px;top:321.11px;font-size:5.07px;font-weight:400;color:#2b2b2b;">€0,00</span>
<span class="t" style="left:250.50px;top:336.90px;font-size:4.53px;font-weight:700;color:#333;">Importe de retención</span>
<span class="t" style="left:299.40px;top:334.64px;font-size:5.02px;font-weight:400;color:#2b2b2b;">No aplicable</span>
<span class="t" style="left:422.30px;top:336.11px;font-size:5.07px;font-weight:400;color:#2b2b2b;">€0,00</span>
<span class="t" style="left:278.20px;top:351.98px;font-size:4.94px;font-weight:400;color:#2b2b2b;">Descuento</span>
<span class="t" style="left:321.20px;top:350.80px;font-size:5.29px;font-weight:400;color:#2b2b2b;">0,00</span>
<span class="t" style="left:335.00px;top:351.10px;font-size:4.72px;font-weight:400;color:#2b2b2b;">%</span>
<span class="t" style="left:350.20px;top:350.93px;font-size:5.03px;font-weight:400;color:#2b2b2b;">€</span>
<span class="t" style="left:375.00px;top:350.80px;font-size:5.29px;font-weight:400;color:#2b2b2b;">0,00</span>
<span class="t" style="left:422.30px;top:350.61px;font-size:5.07px;font-weight:400;color:#2b2b2b;">€0,00</span>
<span class="t" style="left:457.40px;top:350.93px;font-size:5.03px;font-weight:400;color:#2b2b2b;">€</span>
<span class="t" style="left:480.80px;top:350.82px;font-size:5.24px;font-weight:400;color:#2b2b2b;">0,00</span>
<span class="t" style="left:315.00px;top:367.45px;font-size:5.18px;font-weight:700;color:#2a2f36;">Total</span>
<span class="t" style="left:374.20px;top:367.43px;font-size:5.23px;font-weight:700;color:#2a2f36;">€0,00</span>
<span class="t" style="left:421.80px;top:367.40px;font-size:5.27px;font-weight:700;color:#2a2f36;">€0,00</span>
<span class="t" style="left:480.00px;top:367.38px;font-size:5.31px;font-weight:700;color:#2a2f36;">€0,00</span>
<span class="t" style="left:62.70px;top:394.47px;font-size:5.52px;font-weight:400;color:#7d7d7d;">zapatos para clientas21D12D12D12D12D12D</span>
<span class="t" style="left:24.20px;top:432.69px;font-size:4.92px;font-weight:400;color:#fff;-webkit-text-stroke:0.2px #fff;">12°C</span>
<span class="t" style="left:24.00px;top:439.52px;font-size:5.43px;font-weight:400;color:#eee;-webkit-text-stroke:0.15px #eee;">Parc. soleado</span>
<span class="t" style="left:344.30px;top:435.96px;font-size:4.98px;font-weight:700;color:#444;">Buscar</span>
<span class="t" style="left:817.80px;top:436.76px;font-size:4.60px;font-weight:400;color:#fff;-webkit-text-stroke:0.2px #fff;">ESP</span>
<span class="t" style="left:879.20px;top:433.49px;font-size:5.11px;font-weight:400;color:#fff;-webkit-text-stroke:0.2px #fff;">15:43</span>
<span class="t" style="left:863.20px;top:440.35px;font-size:5.75px;font-weight:400;color:#fff;-webkit-text-stroke:0.2px #fff;">22/12/2025</span>
<span class="t" style="left:17.30px;top:432.21px;font-size:4.13px;font-weight:700;color:#fff;">2</span>
</div>
</body></html>
